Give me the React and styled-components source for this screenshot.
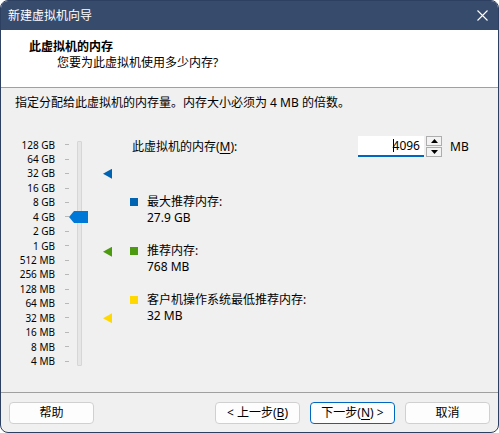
import styled, { createGlobalStyle } from "styled-components";

const GlobalStyle = createGlobalStyle`
  html, body, #root {
    height: 100%;
    margin: 0;
  }
  body {
    background: #ffffff;
    font-family: "Noto Sans", "Noto Sans CJK SC", sans-serif;
    font-size: 12px;
    color: #000;
  }
`;

const ROW_H = 14.45;
const LABELS = [
  "128 GB", "64 GB", "32 GB", "16 GB", "8 GB", "4 GB", "2 GB", "1 GB",
  "512 MB", "256 MB", "128 MB", "64 MB", "32 MB", "16 MB", "8 MB", "4 MB",
];

// position on the log scale, 0 = 128 GB
function rowOf(mb) {
  return Math.log2((128 * 1024) / mb);
}

const MARKERS = [
  { mb: 32 * 1024, color: "#0063b1" },
  { mb: 768, color: "#4c9a10" },
  { mb: 32, color: "#ffd800" },
];

const LEGENDS = [
  { color: "#0063b1", title: "最大推荐内存:", value: "27.9 GB" },
  { color: "#4c9a10", title: "推荐内存:", value: "768 MB" },
  { color: "#ffd800", title: "客户机操作系统最低推荐内存:", value: "32 MB" },
];

export default function App() {
  const memory = 4096;
  return (
    <>
      <GlobalStyle />
      <Window>
        <TitleBar>
          <TitleText>新建虚拟机向导</TitleText>
          <CloseButton>
            <svg width="11" height="11" viewBox="0 0 11 11">
              <path d="M0.5 0.5 L10.5 10.5 M10.5 0.5 L0.5 10.5" stroke="#fff" strokeWidth="1.1" />
            </svg>
          </CloseButton>
        </TitleBar>

        <Header>
          <HeaderTitle>此虚拟机的内存</HeaderTitle>
          <HeaderSub>您要为此虚拟机使用多少内存?</HeaderSub>
        </Header>

        <Body>
          <Instruction>指定分配给此虚拟机的内存量。内存大小必须为 4 MB 的倍数。</Instruction>
          <Main>
            <Scale>
              <Rows>
                {LABELS.map((l) => (
                  <Row key={l}>
                    <RowLabel>{l}</RowLabel>
                    <Tick />
                  </Row>
                ))}
              </Rows>
              <Track />
              <MarkerLane>
                {MARKERS.map((m) => (
                  <Marker
                    key={m.mb}
                    $color={m.color}
                    style={{ top: rowOf(m.mb) * ROW_H + ROW_H / 2 - 5 }}
                  />
                ))}
              </MarkerLane>
              <Thumb style={{ top: rowOf(memory) * ROW_H + ROW_H / 2 - 6 }} />
            </Scale>

            <Content>
              <FieldRow>
                <FieldLabel>
                  此虚拟机的内存(<u>M</u>):
                </FieldLabel>
                <NumberInput>
                  <Caret />
                  {memory}
                </NumberInput>
                <Spinner>
                  <SpinButton>
                    <svg width="7" height="4" viewBox="0 0 7 4">
                      <path d="M0 4 L3.5 0 L7 4 Z" fill="#000" />
                    </svg>
                  </SpinButton>
                  <SpinButton>
                    <svg width="7" height="4" viewBox="0 0 7 4">
                      <path d="M0 0 L3.5 4 L7 0 Z" fill="#000" />
                    </svg>
                  </SpinButton>
                </Spinner>
                <Unit>MB</Unit>
              </FieldRow>

              <Legends>
                {LEGENDS.map((l) => (
                  <Legend key={l.title}>
                    <Swatch $color={l.color} />
                    <div>
                      <div>{l.title}</div>
                      <div>{l.value}</div>
                    </div>
                  </Legend>
                ))}
              </Legends>
            </Content>
          </Main>
        </Body>

        <Footer>
          <Button>帮助</Button>
          <Spacer />
          <Button>
            &lt; 上一步(<u>B</u>)
          </Button>
          <Button $primary>
            下一步(<u>N</u>) &gt;
          </Button>
          <Button>取消</Button>
        </Footer>
      </Window>
    </>
  );
}

const Window = styled.div`
  height: 100%;
  box-sizing: border-box;
  border: 1px solid #2e4062;
  border-radius: 8px;
  overflow: hidden;
  display: flex;
  flex-direction: column;
  background: #f0f0f0;
`;

const TitleBar = styled.div`
  height: 29px;
  background: #374b6c;
  display: flex;
  align-items: center;
  padding-left: 7px;
`;

const TitleText = styled.div`
  flex: 1;
  color: #fff;
  font-size: 12px;
  line-height: 29px;
`;

const CloseButton = styled.div`
  width: 32px;
  height: 29px;
  display: flex;
  align-items: center;
  justify-content: center;
`;

const Header = styled.div`
  height: 58px;
  box-sizing: border-box;
  background: #fff;
  border-bottom: 1px solid #a0a0a0;
  padding: 9px 0 0 28px;
`;

const HeaderTitle = styled.div`
  font-weight: bold;
  line-height: 16px;
`;

const HeaderSub = styled.div`
  line-height: 16px;
  padding-left: 28px;
`;

const Body = styled.div`
  flex: 1;
  padding: 0 14px;
`;

const Instruction = styled.div`
  line-height: 16px;
  margin-top: 7px;
`;

const Main = styled.div`
  display: flex;
  margin-top: 25px;
`;

const Scale = styled.div`
  position: relative;
  display: flex;
  margin-top: 1.5px;
`;

const Rows = styled.div`
  display: flex;
  flex-direction: column;
`;

const Row = styled.div`
  height: ${ROW_H}px;
  display: flex;
  align-items: center;
`;

const RowLabel = styled.div`
  width: 40px;
  text-align: right;
  font-size: 10px;
  line-height: ${ROW_H}px;
  color: #000;
`;

const Tick = styled.div`
  width: 4px;
  height: 1px;
  margin-left: 10px;
  background: #b8b8b8;
`;

const Track = styled.div`
  width: 3px;
  margin: 3px 0 3px 8px;
  background: #e6e6e6;
  border: 1px solid #d6d6d6;
  border-radius: 1px;
`;

const MarkerLane = styled.div`
  position: relative;
  width: 9px;
  margin-left: 21px;
`;

const Marker = styled.div`
  position: absolute;
  left: 0;
  width: 9px;
  height: 10px;
  background: ${(p) => p.$color};
  clip-path: polygon(0 50%, 100% 0, 100% 100%);
`;

const Thumb = styled.div`
  position: absolute;
  left: 54px;
  width: 19px;
  height: 12px;
  background: #0078d7;
  clip-path: polygon(0 50%, 5px 0, 100% 0, 100% 100%, 5px 100%);
`;

const Content = styled.div`
  margin-left: 20px;
  display: flex;
  flex-direction: column;
`;

const FieldRow = styled.div`
  display: flex;
  align-items: center;
  height: 21px;
`;

const FieldLabel = styled.div`
  width: 226px;
  line-height: 16px;
  u {
    text-underline-offset: 2px;
  }
`;

const NumberInput = styled.div`
  width: 66px;
  height: 21px;
  box-sizing: border-box;
  background: #fff;
  border-bottom: 2px solid #0067c0;
  display: flex;
  align-items: center;
  justify-content: flex-end;
  padding-right: 4px;
  line-height: 19px;
`;

const Caret = styled.span`
  width: 1px;
  height: 13px;
  background: #000;
  margin-right: -1px;
`;

const Spinner = styled.div`
  margin-left: 2px;
  width: 16px;
  height: 21px;
  display: flex;
  flex-direction: column;
  gap: 1px;
`;

const SpinButton = styled.div`
  flex: 1;
  box-sizing: border-box;
  border: 1px solid #adadad;
  background: #f3f3f3;
  display: flex;
  align-items: center;
  justify-content: center;
`;

const Unit = styled.div`
  margin-left: 8px;
`;

const Legends = styled.div`
  margin-top: 36.5px;
  margin-left: -2px;
  display: flex;
  flex-direction: column;
  gap: 17px;
`;

const Legend = styled.div`
  display: flex;
  align-items: flex-start;
  line-height: 16px;
`;

const Swatch = styled.div`
  width: 8px;
  height: 8px;
  margin: 4px 9px 0 0;
  background: ${(p) => p.$color};
`;

const Footer = styled.div`
  border-top: 1px solid #a0a0a0;
  padding: 9px 8px 8px 8px;
  display: flex;
  gap: 10px;
`;

const Spacer = styled.div`
  flex: 1;
`;

const Button = styled.div`
  width: 85px;
  height: 22px;
  box-sizing: border-box;
  border: 1px solid ${(p) => (p.$primary ? "#0067c0" : "#d0d0d0")};
  border-radius: 4px;
  background: #fdfdfd;
  display: flex;
  align-items: center;
  justify-content: center;
  line-height: 16px;
  u {
    text-underline-offset: 2px;
  }
`;
